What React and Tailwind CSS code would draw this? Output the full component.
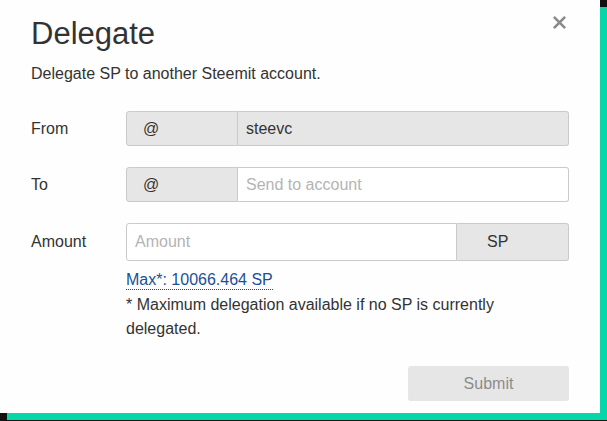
export default function App() {
  return (
    <div className="h-[421px] w-[607px] overflow-hidden bg-[#111111]" style={{ fontFamily: '"Liberation Sans", Arial, sans-serif' }}>
      <div className="relative h-[413px] w-[600px] bg-[#fefefe] px-[31px] pt-[14px] text-[16px] text-[#333333] shadow-[7px_7px_0_#06d6a9]">
        <button className="absolute right-[33px] top-[15px] text-[#8a8a8a]" aria-label="Close">
          <svg width="15" height="15" viewBox="0 0 16 16">
            <path d="M2 2 L14 14 M14 2 L2 14" stroke="currentColor" strokeWidth="2.8" />
          </svg>
        </button>
        <h2 className="text-[31px] leading-[40px]">Delegate</h2>
        <p className="mt-[10px] leading-[20px]">Delegate SP to another Steemit account.</p>

        <div className="mt-[27px] flex items-center">
          <div className="w-[95px]">From</div>
          <div className="flex h-[35px] flex-1">
            <span className="flex w-[112px] items-center rounded-l-[3px] border border-[#cacaca] bg-[#e6e6e6] pl-[16px]">@</span>
            <input
              className="min-w-0 flex-1 rounded-r-[3px] border border-l-0 border-[#cacaca] bg-[#e6e6e6] px-[8px] text-[#333] outline-none"
              value="steevc"
              disabled
              readOnly
            />
          </div>
        </div>

        <div className="mt-[21px] flex items-center">
          <div className="w-[95px]">To</div>
          <div className="flex h-[35px] flex-1">
            <span className="flex w-[112px] items-center rounded-l-[3px] border border-[#cacaca] bg-[#e6e6e6] pl-[16px]">@</span>
            <input
              className="min-w-0 flex-1 rounded-r-[3px] border border-l-0 border-[#cacaca] bg-white px-[8px] outline-none placeholder:text-[#b4b4b4]"
              placeholder="Send to account"
            />
          </div>
        </div>

        <div className="mt-[21px] flex items-start">
          <div className="w-[95px] pt-[7px]">Amount</div>
          <div className="flex-1">
            <div className="flex h-[38px]">
              <input
                className="min-w-0 flex-1 rounded-l-[3px] border border-[#cacaca] bg-white px-[8px] outline-none placeholder:text-[#b4b4b4]"
                placeholder="Amount"
              />
              <span className="flex w-[112px] items-center rounded-r-[3px] border border-l-0 border-[#cacaca] bg-[#e6e6e6] pl-[30px]">SP</span>
            </div>
            <a className="mt-[9px] inline-block border-b border-dotted border-[#1a5099] leading-[19px] text-[#1a5099]" href="#">
              Max*: 10066.464 SP
            </a>
            <p className="mt-[1px] leading-[24px]">
              * Maximum delegation available if no SP is currently delegated.
            </p>
          </div>
        </div>

        <div className="mt-[25px] flex justify-end">
          <button className="h-[35px] w-[161px] rounded-[3px] bg-[#e6e6e6] text-[#8c8c8c]" disabled>
            Submit
          </button>
        </div>
      </div>
    </div>
  );
}
